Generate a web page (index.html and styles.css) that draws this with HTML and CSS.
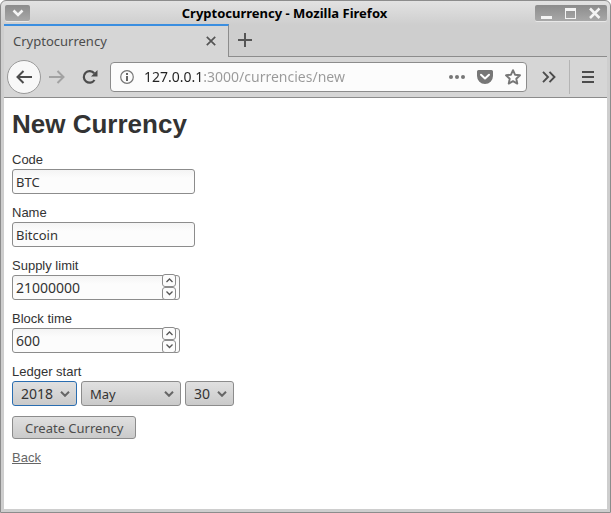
FILE: index.html
```html
<!DOCTYPE html>
<html lang="en">
<head>
  <meta charset="UTF-8">
  <meta name="viewport" content="width=device-width, initial-scale=1.0">
  <title>Cryptocurrency</title>
  <link rel="stylesheet" href="styles.css">
</head>
<body>
<div class="window">
  <header class="titlebar">
    <button class="window-menu" type="button" aria-label="Window menu">
      <svg width="12" height="8" viewBox="0 0 12 8"><path d="M1.500 1.500 6 6l4.500-4.500" fill="none" stroke="#f4f4f4" stroke-width="2.600"/></svg>
    </button>
    <div class="window-title">Cryptocurrency - Mozilla Firefox</div>
    <div class="window-buttons">
      <button type="button" aria-label="Minimize">
        <svg width="12" height="12" viewBox="0 0 12 12"><path d="M0 9h11v3H0z" fill="#f4f4f4"/></svg>
      </button>
      <button type="button" aria-label="Maximize">
        <svg width="12" height="12" viewBox="0 0 12 12"><path d="M0 1h11v11H0zM1 4v7h9V4z" fill="#f4f4f4" fill-rule="evenodd"/></svg>
      </button>
      <button type="button" aria-label="Close">
        <svg width="12" height="12" viewBox="0 0 12 12"><path d="m1 1.500 9.500 9.500m0-9.500L1 11" stroke="#f4f4f4" stroke-width="2.500"/></svg>
      </button>
    </div>
  </header>

  <div class="tabs">
    <div class="tab">
      <span class="tab-title">Cryptocurrency</span>
      <button type="button" aria-label="Close tab">
        <svg width="10" height="10" viewBox="0 0 10 10"><path d="m.8.8 8.400 8.400m0-8.400L.8 9.200" stroke="#555" stroke-width="1.700"/></svg>
      </button>
    </div>
    <div class="tabs-rest">
      <button type="button" aria-label="New tab">
        <svg width="14" height="14" viewBox="0 0 14 14"><path d="M7 0v14M0 7h14" stroke="#555" stroke-width="2"/></svg>
      </button>
    </div>
  </div>

  <nav class="toolbar">
    <button class="back" type="button" aria-label="Go back">
      <svg width="16" height="14" viewBox="0 0 16 14"><path d="M7.500 1 1.500 7l6 6M1.500 7H16" fill="none" stroke="#4c4c4c" stroke-width="2"/></svg>
    </button>
    <button class="forward" type="button" aria-label="Go forward">
      <svg width="16" height="14" viewBox="0 0 16 14"><path d="m8.500 1 6 6-6 6m6-6H0" fill="none" stroke="#a2a2a2" stroke-width="2"/></svg>
    </button>
    <button class="reload" type="button" aria-label="Reload">
      <svg width="16" height="16" viewBox="0 0 16 16"><path d="M12.200 4.300A5.800 5.800 0 1 0 12.500 11" fill="none" stroke="#4c4c4c" stroke-width="2.200"/><path d="M15.500 1v6.500H9z" fill="#4c4c4c"/></svg>
    </button>
    <div class="urlbar">
      <svg width="14" height="14" viewBox="0 0 14 14"><circle cx="7" cy="7" r="6.300" fill="none" stroke="#777" stroke-width="1.200"/><path d="M6 3h2v2H6zM6 6h2v5H6z" fill="#666"/></svg>
      <input class="url" type="text" value="127.0.0.1:3000/currencies/new" aria-label="Address">
      <button type="button" aria-label="Page actions">
        <svg width="16" height="4" viewBox="0 0 16 4"><circle cx="2" cy="2" r="2" fill="#777"/><circle cx="8" cy="2" r="2" fill="#777"/><circle cx="14" cy="2" r="2" fill="#777"/></svg>
      </button>
      <button type="button" aria-label="Save to Pocket">
        <svg width="16" height="14" viewBox="0 0 16 14"><path d="M1.500 0h13A1.500 1.500 0 0 1 16 1.500V6A8 8 0 0 1 0 6V1.500A1.500 1.500 0 0 1 1.500 0z" fill="#777"/><path d="M4 4.800 8 8.500l4-3.700" fill="none" stroke="#fff" stroke-width="2" stroke-linecap="round" stroke-linejoin="round"/></svg>
      </button>
      <button type="button" aria-label="Bookmark this page">
        <svg width="16" height="16" viewBox="0 0 16 16"><path d="m8 1.200 2 4.500 5 .6-3.700 3.400 1 4.900L8 12.200l-4.300 2.400 1-4.900L1 6.300l5-.6z" fill="none" stroke="#777" stroke-width="1.900" stroke-linejoin="round"/></svg>
      </button>
    </div>
    <button class="overflow" type="button" aria-label="More tools">
      <svg width="14" height="12" viewBox="0 0 14 12"><path d="m1 .8 5 5.200-5 5.200M7.500.8l5 5.200-5 5.200" fill="none" stroke="#4c4c4c" stroke-width="1.900"/></svg>
    </button>
    <button class="app-menu" type="button" aria-label="Open menu">
      <svg width="12" height="12" viewBox="0 0 12 12"><path d="M0 1h12M0 6h12M0 11h12" stroke="#4c4c4c" stroke-width="2"/></svg>
    </button>
  </nav>

  <main class="page">
    <h1>New Currency</h1>
    <form>
      <div class="field">
        <label for="currency_code">Code</label>
        <input class="text-input" type="text" id="currency_code" value="BTC">
      </div>
      <div class="field">
        <label for="currency_name">Name</label>
        <input class="text-input" type="text" id="currency_name" value="Bitcoin">
      </div>
      <div class="field">
        <label for="currency_supply_limit">Supply limit</label>
        <div class="number">
          <input class="text-input" type="number" id="currency_supply_limit" value="21000000">
          <div class="spinner">
            <button type="button" aria-label="Increase supply limit"><svg width="7" height="5" viewBox="0 0 7 5"><path d="m.5 4 3-3 3 3" fill="none" stroke="#555" stroke-width="1.300"/></svg></button>
            <button type="button" aria-label="Decrease supply limit"><svg width="7" height="5" viewBox="0 0 7 5"><path d="m.5.500 3 3 3-3" fill="none" stroke="#555" stroke-width="1.300"/></svg></button>
          </div>
        </div>
      </div>
      <div class="field">
        <label for="currency_block_time">Block time</label>
        <div class="number">
          <input class="text-input" type="number" id="currency_block_time" value="600">
          <div class="spinner">
            <button type="button" aria-label="Increase block time"><svg width="7" height="5" viewBox="0 0 7 5"><path d="m.5 4 3-3 3 3" fill="none" stroke="#555" stroke-width="1.300"/></svg></button>
            <button type="button" aria-label="Decrease block time"><svg width="7" height="5" viewBox="0 0 7 5"><path d="m.5.500 3 3 3-3" fill="none" stroke="#555" stroke-width="1.300"/></svg></button>
          </div>
        </div>
      </div>
      <div class="field">
        <label for="ledger_year">Ledger start</label>
        <div class="date">
          <div class="select year">
            <select id="ledger_year">
              <option>2018</option>
            </select>
            <svg width="10" height="6" viewBox="0 0 10 6"><path d="m1 .8 4 4 4-4" fill="none" stroke="#666" stroke-width="2"/></svg>
          </div>
          <div class="select month">
            <select aria-label="Ledger start month">
              <option>May</option>
            </select>
            <svg width="10" height="6" viewBox="0 0 10 6"><path d="m1 .8 4 4 4-4" fill="none" stroke="#666" stroke-width="2"/></svg>
          </div>
          <div class="select day">
            <select aria-label="Ledger start day">
              <option>30</option>
            </select>
            <svg width="10" height="6" viewBox="0 0 10 6"><path d="m1 .8 4 4 4-4" fill="none" stroke="#666" stroke-width="2"/></svg>
          </div>
        </div>
      </div>
      <button class="submit" type="submit">Create Currency</button>
    </form>
    <a href="#">Back</a>
  </main>
</div>
</body>
</html>
```
FILE: styles.css
```css
* {
  box-sizing: border-box;
}
body {
  margin: 0;
  background: #fff;
  font-family: "Noto Sans", sans-serif;
  font-size: 13px;
  color: #333;
}
svg {
  display: block;
}
button {
  display: flex;
  align-items: center;
  justify-content: center;
  padding: 0;
  border: 0;
  background: none;
  font-family: inherit;
}

/* window frame */
.window {
  display: flex;
  flex-direction: column;
  min-height: 100vh;
  border: 1px solid #8c8c8c;
  border-radius: 6px 6px 0 0;
  background: linear-gradient(#e2e2e2, #cecece 24px);
  overflow: hidden;
}
.titlebar {
  display: grid;
  grid-template-columns: 72px 1fr 72px;
  align-items: center;
  height: 23px;
  padding: 0 3px 0 4px;
}
.window-menu {
  width: 25px;
  height: 16px;
  border-radius: 2px;
  background: linear-gradient(#8c8c8c, #a8a8a8);
  box-shadow: 0 1px #e8e8e8;
}
.window-title {
  font-weight: bold;
  line-height: 20px;
  padding-right: 43px;
  text-align: center;
  color: #000;
}
.window-buttons {
  display: flex;
  justify-content: space-around;
  height: 16px;
  border-radius: 2px;
  background: linear-gradient(#8c8c8c, #a8a8a8);
  box-shadow: 0 1px #e8e8e8;
}

/* tabs */
.tabs {
  display: flex;
  height: 33px;
  margin: 0 3px;
}
.tab {
  display: flex;
  align-items: center;
  justify-content: space-between;
  width: 225px;
  padding: 0 12px 2px 9px;
  border-top: 2px solid #3a8ee0;
  border-right: 1px solid #8c8c8c;
  background: #d6d6d6;
  color: #4c4c4c;
}
.tabs-rest {
  flex: 1;
  display: flex;
  align-items: center;
  padding-left: 9px;
  border-bottom: 1px solid #8c8c8c;
}

/* toolbar */
.toolbar {
  display: flex;
  align-items: center;
  height: 41px;
  margin: 0 3px;
  padding: 0 3px;
  border-bottom: 1px solid #8c8c8c;
  background: #d6d6d6;
}
.back {
  width: 34px;
  height: 34px;
  border: 1px solid #999;
  border-radius: 50%;
  background: #f8f8f8;
}
.forward {
  width: 32px;
}
.reload {
  width: 33px;
}
.urlbar {
  flex: 1;
  display: flex;
  align-items: center;
  gap: 12px;
  height: 30px;
  margin-left: 4px;
  padding: 0 5px 0 9px;
  border: 1px solid #8c8c8c;
  border-radius: 4px;
  background: #fcfcfc;
}
/* host in dark, rest of the address in grey */
.url {
  flex: 1;
  min-width: 0;
  padding: 0;
  margin-left: -2px;
  border: 0;
  outline: 0;
  font-family: inherit;
  font-size: 14px;
  line-height: 20px;
  color: transparent;
  background: linear-gradient(to right, #222 60px, #999 60px) text;
}
.overflow {
  width: 42px;
  padding-left: 2px;
}
.app-menu {
  width: 35px;
  height: 34px;
  padding-left: 2px;
  border-left: 1px solid #b4b4b4;
}

/* page */
.page {
  flex: 1;
  margin: 0 3px 3px;
  padding: 8px;
  background: #fff;
  font-family: "Liberation Sans", Arial, sans-serif;
  line-height: 18px;
}
.page h1 {
  margin: 0 0 9px;
  font-size: 26px;
  line-height: 36px;
}
.field {
  margin-bottom: 10px;
}
.field label {
  display: block;
}
.text-input {
  display: block;
  width: 183px;
  height: 25px;
  padding: 0 3px;
  border: 1px solid #8c8c8c;
  border-radius: 3px;
  background: linear-gradient(#f4f4f4, #fcfcfc 8px);
  font-family: "Noto Sans", sans-serif;
  font-size: 13px;
  color: #333;
}
.number {
  position: relative;
  width: 168px;
}
.number .text-input {
  width: 100%;
  font-size: 14px;
  appearance: textfield;
}
.spinner {
  position: absolute;
  top: -1px;
  right: 4px;
  width: 14px;
}
.spinner button {
  width: 100%;
  height: 13px;
  border: 1px solid #8c8c8c;
  border-radius: 3px;
  background: #fcfcfc;
}
.date {
  display: flex;
  gap: 4px;
}
.select {
  position: relative;
}
.select select {
  width: 100%;
  height: 25px;
  padding: 0 8px;
  border: 1px solid #8c8c8c;
  border-radius: 3px;
  appearance: none;
  background: linear-gradient(#e0e0e0, #cacaca);
  font-family: "Noto Sans", sans-serif;
  font-size: 14px;
  color: #333;
}
.select svg {
  position: absolute;
  top: 10px;
  right: 7px;
  pointer-events: none;
}
.year {
  width: 65px;
}
.year select {
  border-color: #2a6db0;
}
.month {
  width: 100px;
}
.month select {
  font-size: 13px;
}
.day {
  width: 49px;
}
.submit {
  height: 23px;
  margin-bottom: 10px;
  padding: 0 12px;
  border: 1px solid #8c8c8c;
  border-radius: 3px;
  background: linear-gradient(#e0e0e0, #cacaca);
  font-family: "Noto Sans", sans-serif;
  font-size: 13px;
  color: #4c4c4c;
}
.page a {
  color: #666;
}
```
